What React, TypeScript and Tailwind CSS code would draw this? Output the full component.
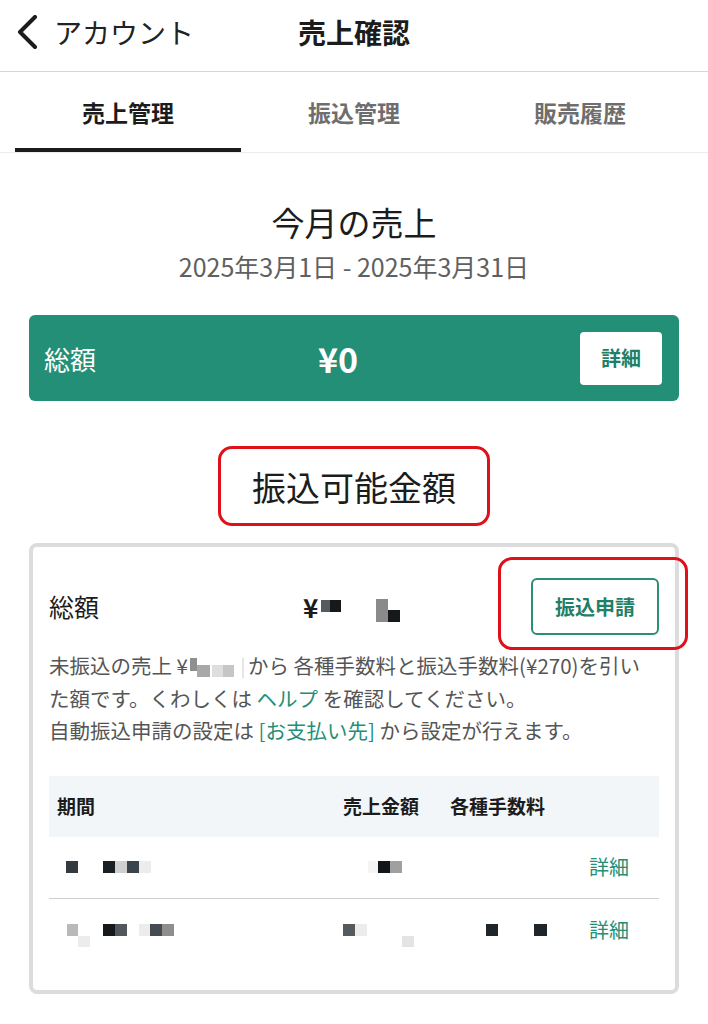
import React from "react";

const font = { fontFamily: '"Noto Sans CJK JP", "Noto Sans", sans-serif' };

type Cell = [number, number, string, number?, number?];

// mosaic used to mask values in the screenshot
function Blob({ cells, h = 12 }: { cells: Cell[]; h?: number }) {
  const w = Math.max(...cells.map((c) => c[0] + (c[3] ?? 12)));
  return (
    <span className="relative inline-block shrink-0 align-middle" style={{ width: w, height: h }}>
      {cells.map(([x, y, c, cw, ch], i) => (
        <span
          key={i}
          className="absolute"
          style={{ left: x, top: y, width: cw ?? 12, height: ch ?? 12, background: c }}
        />
      ))}
    </span>
  );
}

export default function App() {
  return (
    <div className="min-h-[1024px] w-[708px] bg-white text-[#1c1c1c]" style={font}>
      {/* nav bar */}
      <header className="grid h-[72px] grid-cols-[1fr_auto_1fr] items-center border-b border-[#d6d6d6] pb-[8px]">
        <div className="flex items-center pl-[15px]">
          <svg width="24" height="34" viewBox="0 0 24 34" fill="none">
            <path d="M20 2 L5 17 L20 32" stroke="#1c1c1c" strokeWidth="4" strokeLinecap="round" strokeLinejoin="round" />
          </svg>
          <span className="ml-[15px] text-[28px] leading-none text-[#222]">アカウント</span>
        </div>
        <h1 className="text-[28px] font-bold leading-none">売上確認</h1>
        <div />
      </header>

      {/* tabs */}
      <nav className="grid h-[81px] grid-cols-3 border-b border-[#ececec] px-[15px]">
        <div className="flex items-center justify-center border-b-4 border-[#1c1c1c] pt-[4px] text-[23px] font-bold">売上管理</div>
        <div className="flex items-center justify-center text-[23px] font-semibold text-[#6e6e6e]">振込管理</div>
        <div className="flex items-center justify-center text-[23px] font-semibold text-[#6e6e6e]">販売履歴</div>
      </nav>

      <main className="px-[29px]">
        <div className="mt-[46px] text-center text-[33px] leading-[46px]">今月の売上</div>
        <div className="mt-[4px] text-center text-[25px] leading-[34px] text-[#606060]">2025年3月1日 - 2025年3月31日</div>

        {/* total card */}
        <div className="mt-[32px] flex h-[86px] items-center rounded-[6px] bg-[#238f76] pl-[15px] pr-[17px] text-white">
          <span className="w-[274px] text-[26px]">総額</span>
          <span className="text-[34px] font-bold">¥0</span>
          <button className="ml-auto flex h-[53px] w-[82px] items-center justify-center rounded-[4px] bg-white text-[20px] font-bold text-[#1f7f68]">
            詳細
          </button>
        </div>

        {/* highlighted heading */}
        <div className="mt-[45px] flex justify-center">
          <div className="flex h-[80px] w-[272px] items-center justify-center rounded-[14px] border-[3px] border-[#e0101a] text-[34px]">
            振込可能金額
          </div>
        </div>

        {/* transferable card */}
        <section className="mt-[17px] rounded-[8px] border-4 border-[#dcdcdc] px-[16px] pb-[29px] pt-[31px]">
          <div className="flex items-center">
            <span className="w-[254px] text-[25px]">総額</span>
            <span className="flex items-center text-[26px] font-bold">
              ¥
              <span className="ml-[3px] -mt-[10px]">
                <Blob cells={[[0, 0, "#555a5f", 9, 12], [9, 0, "#15191c", 11, 12]]} />
              </span>
              <span className="ml-[35px] -mt-[1px]">
                <Blob h={23} cells={[[0, 0, "#8a8a8a", 12, 23], [12, 11, "#15191c", 12, 12]]} />
              </span>
            </span>
            <div className="relative ml-auto">
              <button className="flex h-[57px] w-[128px] items-center justify-center rounded-[6px] border-2 border-[#2a8f75] text-[20px] font-bold text-[#1f7f68]">
                振込申請
              </button>
              <span className="pointer-events-none absolute -bottom-[15px] -left-[33px] -right-[29px] -top-[21px] rounded-[14px] border-[3px] border-[#e0101a]" />
            </div>
          </div>

          <p className="mt-[14px] text-[20.5px] leading-[32.5px] text-[#555]">
            未振込の売上 ¥
            <span className="ml-[2px] mr-[4px]">
              <Blob
                h={20}
                cells={[
                  [0, 0, "#8f8f8f", 7, 13],
                  [7, 7, "#a8a8a8", 13, 12],
                  [22, 7, "#dedede", 11, 12],
                  [33, 7, "#c6c6c6", 11, 12],
                  [52, 0, "#e6e6e6", 2, 20],
                ]}
              />
            </span>
            から 各種手数料と振込手数料(¥270)を引い
            <br />
            た額です。くわしくは <span className="text-[#238f76]">ヘルプ</span> を確認してください。
            <br />
            自動振込申請の設定は <span className="text-[#238f76]">[お支払い先]</span> から設定が行えます。
          </p>

          {/* table */}
          <div className="mt-[29px]">
            <div className="grid h-[61px] grid-cols-[286px_107px_130px_1fr] items-center bg-[#f2f6f9] pl-[8px] text-[19px] font-bold">
              <span>期間</span>
              <span>売上金額</span>
              <span>各種手数料</span>
              <span />
            </div>
            <div className="grid h-[62px] grid-cols-[286px_107px_130px_1fr] items-center border-b border-[#cfcfcf] pl-[8px]">
              <span className="flex">
                <Blob
                  cells={[
                    [9, 0, "#333a40"],
                    [46, 0, "#1a1f24"],
                    [58, 0, "#d0d0d0"],
                    [70, 0, "#3c444b"],
                    [82, 0, "#ececec"],
                  ]}
                />
              </span>
              <span className="flex">
                <Blob cells={[[25, 0, "#f4f4f4", 10], [35, 0, "#11161a"], [47, 0, "#a0a0a0"]]} />
              </span>
              <span />
              <span className="pl-[9px] text-[20px] text-[#238f76]">詳細</span>
            </div>
            <div className="grid h-[62px] grid-cols-[286px_107px_130px_1fr] items-center pl-[8px]">
              <span className="flex">
                <Blob
                  cells={[
                    [10, 0, "#b9b9b9", 11],
                    [21, 12, "#ececec", 12, 11],
                    [46, 0, "#15191c"],
                    [58, 0, "#51575c"],
                    [82, 0, "#ececec", 11],
                    [93, 0, "#444b52"],
                    [105, 0, "#8e8e8e"],
                  ]}
                />
              </span>
              <span className="flex">
                <Blob cells={[[0, 0, "#555a5f"], [12, 0, "#ececec"], [59, 12, "#e4e4e4", 12, 11]]} />
              </span>
              <span className="flex">
                <Blob cells={[[36, 0, "#1e252b"], [84, 0, "#1e252b", 13]]} />
              </span>
              <span className="pl-[9px] text-[20px] text-[#238f76]">詳細</span>
            </div>
          </div>
        </section>
      </main>
    </div>
  );
}
